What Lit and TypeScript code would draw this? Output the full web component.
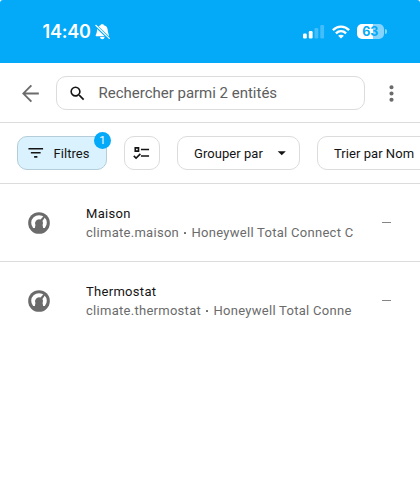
import { LitElement, html, css, svg } from "lit";
import { customElement } from "lit/decorators.js";

const paths = {
  back: "M20,11.1V12.9H7.2L13.5,19.1L12.2,20.3L3.9,12L12.2,3.7L13.5,4.9L7.2,11.1H20Z",
  search: "M9.5,3A6.5,6.5 0 0,1 16,9.5C16,11.11 15.41,12.59 14.44,13.73L14.71,14H15.5L20.5,19L19,20.5L14,15.5V14.71L13.73,14.44C12.59,15.41 11.11,16 9.5,16A6.5,6.5 0 0,1 3,9.5A6.5,6.5 0 0,1 9.5,3M9.5,5C7,5 5,7 5,9.5C5,12 7,14 9.5,14C12,14 14,12 14,9.5C14,7 12,5 9.5,5Z",
  dots: "M12,16A2,2 0 0,1 14,18A2,2 0 0,1 12,20A2,2 0 0,1 10,18A2,2 0 0,1 12,16M12,10A2,2 0 0,1 14,12A2,2 0 0,1 12,14A2,2 0 0,1 10,12A2,2 0 0,1 12,10M12,4A2,2 0 0,1 14,6A2,2 0 0,1 12,8A2,2 0 0,1 10,6A2,2 0 0,1 12,4Z",
  filter: "M6,13H18V11H6M3,6V8H21V6M10,18H14V16H10V18Z",
  checks: "M3,5H9V11H3V5M5,7V9H7V7H5M11,7H21V9H11V7M11,15H21V17H11V15M5,20L1.5,16.5L2.91,15.09L5,17.17L9.59,12.59L11,14L5,20Z",
  down: "M7,10L12,15L17,10H7Z",
};

const icon = (name: keyof typeof paths) =>
  html`<svg class="icon ${name}" viewBox="0 0 24 24">${svg`<path d=${paths[name]}></path>`}</svg>`;

const entities = [
  { name: "Maison", detail: "climate.maison", source: "Honeywell Total Connect C" },
  { name: "Thermostat", detail: "climate.thermostat", source: "Honeywell Total Conne" },
];

@customElement("app-root")
export class AppRoot extends LitElement {
  static styles = css`
    :host {
      display: block;
      width: 420px;
      height: 500px;
      overflow: hidden;
      background: #fff;
      color: #141414;
      font-family: Roboto, sans-serif;
    }
    * { box-sizing: border-box; }
    svg { display: block; flex: none; }
    .icon { fill: currentColor; width: 19.5px; height: 19.5px; }
    .status {
      height: 63px;
      background: #04a9f8;
      border-radius: 3px 3px 0 0;
      display: flex;
      align-items: center;
      padding: 0 33.5px 0 42.5px;
      color: #fff;
    }
    .clock {
      font: 600 18px/22px Inter, sans-serif;
      letter-spacing: -0.2px;
      width: 49.5px;
      white-space: nowrap;
    }
    .bell { margin-left: 3px; }
    .signals { margin-left: auto; display: flex; align-items: center; }
    .wifi { margin-left: 7px; }
    .battery {
      margin-left: 7px;
      width: 27.5px;
      height: 15px;
      border-radius: 5px;
      background: linear-gradient(90deg, #fff 61%, #86d4fc 61%);
      color: #04a9f8;
      font: 700 12.5px/15px Inter, sans-serif;
      text-align: center;
    }
    .tip {
      width: 1.5px;
      height: 5px;
      margin-left: 1px;
      border-radius: 0 2px 2px 0;
      background: #86d4fc;
    }
    .toolbar {
      height: 60px;
      border-bottom: 1px solid #dcdcdc;
      display: flex;
      align-items: center;
      padding: 1px 16px 0 18px;
      color: #6b6b6b;
    }
    .back, .dots { width: 25px; height: 25px; }
    .search-box {
      width: 309px;
      height: 34px;
      margin: 0 13.5px 0 13px;
      border: 1px solid #dcdcdc;
      border-radius: 10px;
      display: flex;
      align-items: center;
      padding-left: 10.5px;
      font-size: 15px;
      letter-spacing: -0.01px;
      color: #5e5e5e;
    }
    .search { width: 19px; height: 19px; color: #141414; margin-right: 12px; }
    .filters {
      height: 61px;
      border-bottom: 1px solid #dcdcdc;
      display: flex;
      align-items: center;
      padding-left: 17px;
      font-size: 13px;
      letter-spacing: 0.05px;
      white-space: nowrap;
      overflow: hidden;
    }
    .chip {
      position: relative;
      flex: none;
      height: 34px;
      border: 1px solid #dcdcdc;
      border-radius: 10px;
      display: flex;
      align-items: center;
      margin-right: 17px;
    }
    .active {
      width: 90px;
      background: #d9f2fe;
      border-color: #b5cdd9;
      padding-left: 7.5px;
      gap: 8.5px;
    }
    .badge {
      position: absolute;
      right: -5px;
      top: -5px;
      width: 17px;
      height: 17px;
      border-radius: 50%;
      background: #04a9f8;
      color: #fff;
      font-size: 11.5px;
      line-height: 17px;
      text-align: center;
    }
    .select { width: 36px; justify-content: center; }
    .group { width: 123px; padding-left: 16px; justify-content: space-between; padding-right: 8px; }
    .sort { width: 130px; padding-left: 16px; }
    .row {
      height: 78px;
      border-bottom: 1px solid #dcdcdc;
      display: flex;
      align-items: center;
      padding-left: 25.5px;
    }
    .row:last-child { border-bottom: 0; height: 77px; }
    .thermostat { width: 26px; height: 26px; }
    .info { width: 269px; margin-left: 34.5px; white-space: nowrap; overflow: hidden; padding-top: 2px; }
    .name { font-size: 13px; line-height: 18px; letter-spacing: 0.3px; }
    .detail {
      font-size: 13px;
      line-height: 18px;
      padding-top: 1px;
      letter-spacing: 0.28px;
      color: #6b6b6b;
      display: flex;
      align-items: center;
    }
    .sep { width: 2px; height: 2px; margin: 0 5.5px 0 5px; background: #6b6b6b; border-radius: 0.5px; }
    .state { width: 9px; height: 1px; margin-left: 27px; background: #858585; }
  `;

  render() {
    return html`
      <header class="status">
        <div class="clock">14:40</div>
        <svg class="bell" width="16" height="16" viewBox="0 0 16 16">
          <path fill="#fff" d="M7.3.3C8.6.3 9 1 9.3 1.5C11.5 2 12.6 3.8 12.7 6C12.8 9 13.6 9.6 14 11.2C14.1 11.8 13.7 12.2 13.1 12.2H1.5C.9 12.2.5 11.8.7 11.2C1.4 9.5 1.9 9 2 6C2.1 3.8 3.2 2 5.3 1.5C5.6.8 6 .3 7.3.3ZM5 13H9.6C9.3 14.7 8.4 15.2 7.3 15.2S5.3 14.7 5 13Z"></path>
          <path stroke="#04a9f8" stroke-width="3" d="M0 1L14.8 15"></path>
          <path stroke="#fff" stroke-width="1.2" stroke-linecap="round" d="M.8 1.3L14.3 14.4"></path>
        </svg>
        <div class="signals">
          <svg width="22" height="14" viewBox="0 0 22 14" fill="#fff">
            <rect x="0" y="8.5" width="3.8" height="5" rx="1.2"></rect>
            <rect x="5.8" y="6" width="3.8" height="7.5" rx="1.2"></rect>
            <rect x="11.5" y="3" width="3.8" height="10.5" rx="1.2" opacity=".25"></rect>
            <rect x="17.3" y="0" width="3.8" height="13.5" rx="1.2" opacity=".25"></rect>
          </svg>
          <svg class="wifi" width="18" height="14" viewBox="0 0 18 14" fill="none" stroke="#fff" stroke-width="2.4">
            <path d="M.9 5.1C5.5.5 12.5.5 17.1 5.1"></path>
            <path d="M3.9 8.3C6.9 5.5 11.1 5.5 14.1 8.3"></path>
            <path fill="#fff" stroke="none" d="M9 13.6L6.1 10.8C7.7 9.3 10.3 9.3 11.9 10.8Z"></path>
          </svg>
          <div class="battery">63</div>
          <div class="tip"></div>
        </div>
      </header>
      <div class="toolbar">
        ${icon("back")}
        <div class="search-box">${icon("search")}<span>Rechercher parmi 2 entités</span></div>
        ${icon("dots")}
      </div>
      <div class="filters">
        <div class="chip active">${icon("filter")}<span>Filtres</span><div class="badge">1</div></div>
        <div class="chip select">${icon("checks")}</div>
        <div class="chip group"><span>Grouper par</span>${icon("down")}</div>
        <div class="chip sort">Trier par Nom</div>
      </div>
      <main>
        ${entities.map(
          (e) => html`<div class="row">
            <svg class="thermostat" viewBox="0 0 24 24">
              <circle cx="12" cy="12" r="10" fill="#6b6b6b"></circle>
              <path fill="#fff" d="M6.6 16.7A7.2 7.2 0 1 1 17.4 16.7H15.7L14.6 12H9.4L8.3 16.7Z"></path>
              <path fill="#6b6b6b" d="M8 17.3L8.9 14.2A3.7 3.7 0 0 1 13.4 8.8L17 4.9L18 5.9L15.2 10.2A3.7 3.7 0 0 1 15.1 14.2L16 17.3Z"></path>
            </svg>
            <div class="info">
              <div class="name">${e.name}</div>
              <div class="detail"><span>${e.detail}</span><i class="sep"></i><span>${e.source}</span></div>
            </div>
            <div class="state"></div>
          </div>`
        )}
      </main>
    `;
  }
}
